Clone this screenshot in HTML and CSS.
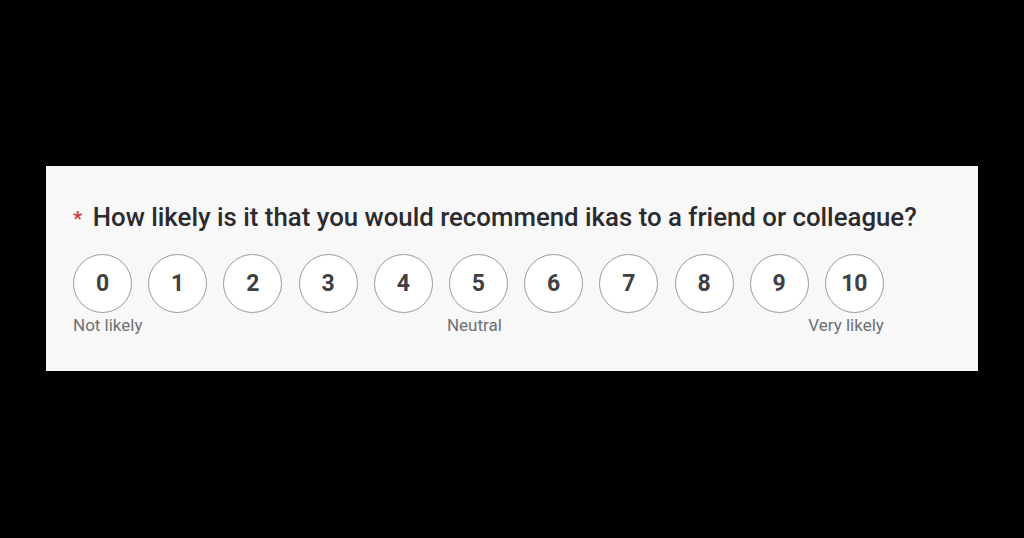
FILE: index.html
```html
<!DOCTYPE html>
<html lang="en">

<head>
    <meta charset="UTF-8">
    <meta name="viewport" content="width=device-width, initial-scale=1.0">
    <title>NPS question</title>
    <link rel="stylesheet" href="styles.css">
</head>

<body>
    <div class="panel">
        <h2 class="question"><span class="required">*</span> How likely is it that you would recommend ikas to a friend or colleague?</h2>
        <div class="scale">
            <button class="score">0</button>
            <button class="score">1</button>
            <button class="score">2</button>
            <button class="score">3</button>
            <button class="score">4</button>
            <button class="score">5</button>
            <button class="score">6</button>
            <button class="score">7</button>
            <button class="score">8</button>
            <button class="score">9</button>
            <button class="score">10</button>
        </div>
        <div class="scaleLabels">
            <span class="label first">Not likely</span>
            <span class="label middle">Neutral</span>
            <span class="label last">Very likely</span>
        </div>
    </div>
</body>

</html>
```

FILE: styles.css
```css
html,
body {
    margin: 0;
    height: 100%;
    background-color: #000;
}

body {
    padding-top: 166px;
    box-sizing: border-box;
    font-family: Roboto, "Open Sans", sans-serif;
}

.panel {
    margin-left: 46px;
    width: 932px;
    height: 205px;
    box-sizing: border-box;
    padding: 35px 27px 0;
    background-color: #f8f8f8;
}

.question {
    margin: 0;
    font-size: 25.8px;
    font-weight: 500;
    line-height: 32px;
    color: #2b2b2f;
}

.required {
    color: #d33a2c;
    font-size: 21px;
    margin-right: 4px;
}

.scale,
.scaleLabels {
    display: grid;
    grid-template-columns: repeat(11, 58px);
    column-gap: 17.2px;
}

.scale {
    margin-top: 19px;
}

.score {
    width: 59px;
    height: 59px;
    border-radius: 50%;
    border: 1.5px solid #9a9a9a;
    background-color: #fff;
    font-family: inherit;
    font-size: 23px;
    font-weight: 700;
    color: #404044;
    padding: 0;
    cursor: pointer;
}

.label {
    font-size: 17px;
    color: #6f6f74;
    white-space: nowrap;
    line-height: 22px;
    margin-top: 1px;
}

.first {
    grid-column: 1;
}

.middle {
    grid-column: 6;
    margin-left: -2px;
}

.last {
    grid-column: 11;
    justify-self: end;
    direction: rtl;
    margin-right: -1px;
}
```
